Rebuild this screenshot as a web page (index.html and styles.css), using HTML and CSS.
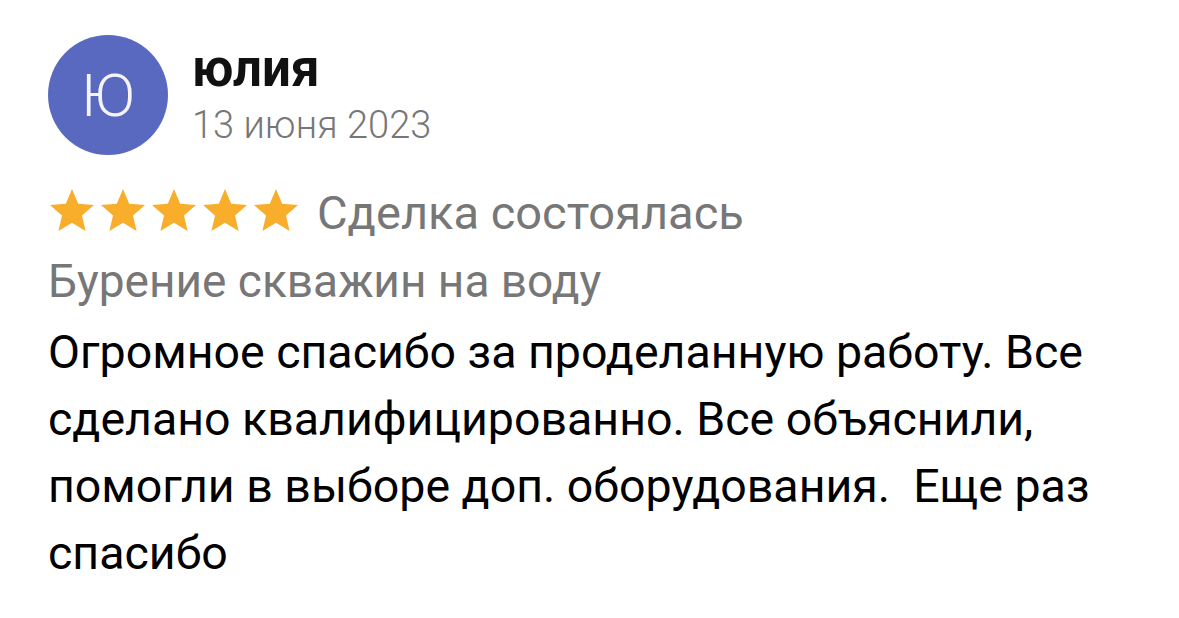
FILE: index.html
```html
<!DOCTYPE html>
<html lang="ru">
<head>
<meta charset="utf-8">
<title>Отзыв</title>
<link rel="stylesheet" href="styles.css">
</head>
<body>
<div class="review">
  <div class="header">
    <div class="avatar">Ю</div>
    <div class="meta">
      <div class="name">юлия</div>
      <div class="date">13 июня 2023</div>
    </div>
  </div>
  <div class="rating">
    <div class="stars">
      <svg class="star" viewBox="2 2 20 19"><path d="M12 17.27L18.18 21l-1.64-7.03L22 9.24l-7.19-.61L12 2 9.19 8.63 2 9.24l5.46 4.73L5.82 21z"/></svg>
      <svg class="star" viewBox="2 2 20 19"><path d="M12 17.27L18.18 21l-1.64-7.03L22 9.24l-7.19-.61L12 2 9.19 8.63 2 9.24l5.46 4.73L5.82 21z"/></svg>
      <svg class="star" viewBox="2 2 20 19"><path d="M12 17.27L18.18 21l-1.64-7.03L22 9.24l-7.19-.61L12 2 9.19 8.63 2 9.24l5.46 4.73L5.82 21z"/></svg>
      <svg class="star" viewBox="2 2 20 19"><path d="M12 17.27L18.18 21l-1.64-7.03L22 9.24l-7.19-.61L12 2 9.19 8.63 2 9.24l5.46 4.73L5.82 21z"/></svg>
      <svg class="star" viewBox="2 2 20 19"><path d="M12 17.27L18.18 21l-1.64-7.03L22 9.24l-7.19-.61L12 2 9.19 8.63 2 9.24l5.46 4.73L5.82 21z"/></svg>
    </div>
    <div class="deal">Сделка состоялась</div>
  </div>
  <div class="category">Бурение скважин на воду</div>
  <p class="text">Огромное спасибо за проделанную работу. Все сделано квалифицированно. Все объяснили, помогли в выборе доп. оборудования.&nbsp; Еще раз спасибо</p>
</div>
</body>
</html>
```

FILE: styles.css
```css
html, body {
  margin: 0;
  padding: 0;
  background: #ffffff;
}

body {
  font-family: Roboto, "Liberation Sans", sans-serif;
  color: #000000;
}

.review {
  padding: 35px 0 0 48px;
  width: 1060px;
}

.header {
  display: flex;
  align-items: flex-start;
}

.avatar {
  width: 120px;
  height: 120px;
  border-radius: 50%;
  background: #5a69c0;
  color: #f4f4fa;
  font-size: 60px;
  font-weight: 300;
  display: flex;
  align-items: center;
  justify-content: center;
  flex-shrink: 0;
}

.meta {
  margin-left: 24px;
  padding-top: 6px;
  display: flex;
  flex-direction: column;
}

.name {
  font-size: 51px;
  font-weight: 700;
  line-height: 56px;
  color: #111111;
}

.date {
  font-size: 38px;
  font-weight: 300;
  line-height: 46px;
  margin-top: 5px;
  color: #777777;
}

.rating {
  display: flex;
  align-items: center;
  margin-top: 28px;
  height: 60px;
}

.stars {
  display: flex;
  gap: 7px;
  margin-left: 2px;
  margin-top: -6px;
}

.star {
  width: 44px;
  height: 42px;
  fill: #f8ad2b;
  display: block;
}

.deal {
  margin-left: 19px;
  font-size: 47px;
  line-height: 60px;
  color: #777777;
}

.category {
  margin-top: 8px;
  font-size: 46px;
  line-height: 60px;
  color: #777777;
}

.text {
  margin: 8px 0 0 0;
  font-size: 46.5px;
  line-height: 67px;
  color: #000000;
}
```
